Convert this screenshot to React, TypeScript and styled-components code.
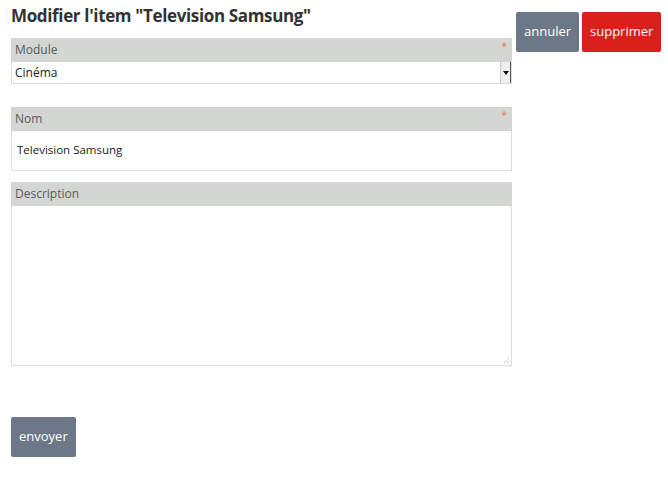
import React from "react";
import styled, { createGlobalStyle } from "styled-components";

const Global = createGlobalStyle`
  html, body { margin: 0; padding: 0; background: #fff; }
  body { font-family: "Open Sans", "Noto Sans", sans-serif; color: #333; }
  * { box-sizing: border-box; }
`;

const Page = styled.div`
  width: 668px;
  height: 484px;
  padding: 0 8px 0 11px;
  display: grid;
  grid-template-columns: 501px auto;
  column-gap: 4px;
  align-items: start;
`;

const Main = styled.div`
  display: flex;
  flex-direction: column;
`;

const Title = styled.h1`
  margin: 3px 0 0 0;
  height: 35px;
  font-size: 17px;
  font-weight: 700;
  letter-spacing: -0.35px;
  color: #333;
  line-height: 26px;
`;

const Field = styled.div<{ $gap: number }>`
  display: flex;
  flex-direction: column;
  margin-bottom: ${(p) => p.$gap}px;
`;

const Header = styled.div`
  position: relative;
  height: 24px;
  background: #d3d6d3;
  padding: 4px 4px 0 4px;
  font-size: 12px;
  color: #5a5a5a;
  line-height: 16px;
`;

const Star = styled.span`
  position: absolute;
  right: 5px;
  top: 3px;
  color: #e8793a;
  font-size: 10px;
  line-height: 10px;
`;

const SelectBox = styled.div`
  height: 22px;
  border: 1px solid #ddd;
  border-top: none;
  display: flex;
  align-items: stretch;
  background: #fff;
`;

const SelectValue = styled.div`
  flex: 1;
  padding: 2px 0 0 3px;
  font-size: 12px;
  color: #222;
`;

const Arrow = styled.div`
  width: 11px;
  background: #eee;
  border-left: 1px solid #ccc;
  border-right: 1px solid #555;
  display: flex;
  align-items: center;
  justify-content: center;
`;

const Input = styled.div`
  height: 40px;
  border: 1px solid #ddd;
  border-top: none;
  background: #fff;
  padding: 11px 0 0 5px;
  font-size: 11.5px;
  color: #222;
`;

const TextArea = styled.div`
  position: relative;
  height: 160px;
  border: 1px solid #ddd;
  border-top: none;
  background: #fff;
`;

const Grip = styled.svg`
  position: absolute;
  right: 1px;
  bottom: 1px;
`;

const Button = styled.button<{ $bg: string }>`
  height: 40px;
  border: none;
  border-radius: 2px;
  background: ${(p) => p.$bg};
  color: #fff;
  font-family: "Open Sans", "Noto Sans", sans-serif;
  font-size: 13px;
  padding: 0 8px 3px 8px;
  cursor: pointer;
`;

const Actions = styled.div`
  display: flex;
  gap: 3px;
  margin-top: 12px;
`;

const Footer = styled.div`
  margin-top: 51px;
`;

export default function App() {
  return (
    <>
      <Global />
      <Page>
        <Main>
          <Title>Modifier l'item "Television Samsung"</Title>
          <Field $gap={23}>
            <Header>
              Module<Star>*</Star>
            </Header>
            <SelectBox>
              <SelectValue>Cinéma</SelectValue>
              <Arrow>
                <svg width="6" height="4" viewBox="0 0 6 4">
                  <path d="M0 0 H6 L3 4 Z" fill="#111" />
                </svg>
              </Arrow>
            </SelectBox>
          </Field>
          <Field $gap={11}>
            <Header>
              Nom<Star>*</Star>
            </Header>
            <Input>Television Samsung</Input>
          </Field>
          <Field $gap={0}>
            <Header>Description</Header>
            <TextArea>
              <Grip width="7" height="7" viewBox="0 0 7 7">
                <path d="M6 1 L1 6 M6 4 L4 6" stroke="#ccc" strokeWidth="1" />
              </Grip>
            </TextArea>
          </Field>
          <Footer>
            <Button $bg="#6c7888">envoyer</Button>
          </Footer>
        </Main>
        <Actions>
          <Button $bg="#6c7888">annuler</Button>
          <Button $bg="#d9201a">supprimer</Button>
        </Actions>
      </Page>
    </>
  );
}
